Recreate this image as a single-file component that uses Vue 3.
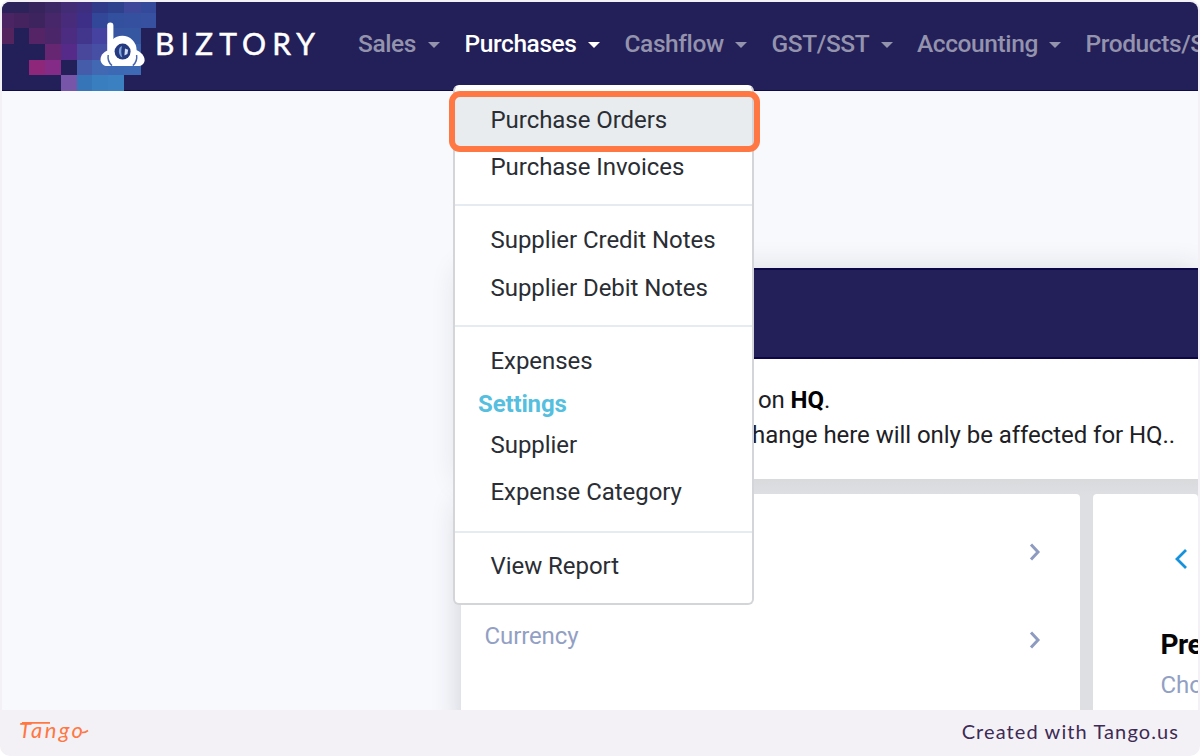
<template>
  <div class="frame">
    <div class="screen">
      <header class="navbar">
        <div class="brand">
          <svg class="mosaic" width="156" height="89" viewBox="0 0 156 89" shape-rendering="crispEdges">
            <rect
              v-for="cell in cells"
              :key="cell.id"
              :x="cell.x"
              :y="cell.y"
              :width="cell.w"
              :height="cell.h"
              :fill="cell.fill"
            />
          </svg>
          <svg class="brand-mark" width="46" height="46" viewBox="0 0 46 46">
            <path d="M9 28 C3 30 0 34 0.6 38.5 C1.2 42 4 44 7 44 H38 C41.5 44 44.3 42 44.6 38.5 C44.8 34 41 30 36 28 Z" fill="#fff" />
            <path d="M8.2 33 C7.4 38 9 41 12 43.6 M36.6 33 C37.4 38 35.8 41 32.8 43.6" fill="none" stroke="#4a66ae" stroke-width="1.5" />
            <path d="M10.3 3.6 V28" fill="none" stroke="#fff" stroke-width="6.2" stroke-linecap="round" />
            <circle cx="22.3" cy="28" r="14.3" fill="#fff" />
            <path d="M11 34 H34 L31.5 43.5 H13.5 Z" fill="#fff" />
            <circle cx="22.6" cy="29.6" r="8" fill="#263a80" />
            <path d="M22 24 C18 25 17.5 33 22.4 35.6 C21 32 21 28 22 24 Z" fill="#7fa3d6" />
            <path d="M25 26.5 L28.2 27.8 L27.4 32 L24.4 33.5 Z" fill="#cfdcf2" />
          </svg>
          <span class="brand-name">BIZTORY</span>
        </div>
        <nav class="nav-links">
          <a
            v-for="link in links"
            :key="link.label"
            class="nav-link"
            :class="[link.key, { active: link.active }]"
          >
            {{ link.label }}<i v-if="link.caret" class="caret"></i>
          </a>
        </nav>
      </header>

      <main class="content">
        <section class="panel">
          <div class="panel-head"></div>
          <div class="panel-body">
            <p class="line-first">on <b>HQ</b>.</p>
            <p class="line-second">hange here will only be affected for HQ..</p>
          </div>
        </section>
        <section class="cards">
          <div class="card card-list">
            <div class="list-row">
              <span></span>
              <svg class="chevron" width="14" height="20" viewBox="0 0 14 20">
                <path d="M3 2.5 L10 10 L3 17.5" />
              </svg>
            </div>
            <div class="list-row">
              <span class="list-label">Currency</span>
              <svg class="chevron" width="14" height="20" viewBox="0 0 14 20">
                <path d="M3 2.5 L10 10 L3 17.5" />
              </svg>
            </div>
          </div>
          <div class="card card-detail">
            <svg class="back" width="16" height="22" viewBox="0 0 16 22">
              <path d="M13 2 L4 11 L13 20" />
            </svg>
            <h3>Pre</h3>
            <p>Cho</p>
          </div>
        </section>
      </main>

      <div class="dropdown">
        <template v-for="(item, i) in menu" :key="i">
          <div v-if="item.type === 'divider'" class="divider" :class="{ last: item.last }"></div>
          <div v-else-if="item.type === 'header'" class="menu-header">{{ item.label }}</div>
          <a v-else class="menu-item" :class="{ hovered: item.hovered }">{{ item.label }}</a>
        </template>
      </div>
      <div class="highlight"></div>
    </div>

    <footer class="footer">
      <svg class="tango" width="72" height="36" viewBox="0 0 72 36">
        <path d="M2 6.9 H30" />
        <text x="-1" y="22" textLength="64">Tango</text>
        <path d="M62 16.5 Q65 16.8 68 14.5" />
      </svg>
      <span class="credit">Created with Tango.us</span>
    </footer>
  </div>
</template>

<script setup>
const links = [
  { key: 'sales', label: 'Sales', caret: true },
  { key: 'purchases', label: 'Purchases', caret: true, active: true },
  { key: 'cashflow', label: 'Cashflow', caret: true },
  { key: 'gst', label: 'GST/SST', caret: true },
  { key: 'accounting', label: 'Accounting', caret: true },
  { key: 'products', label: 'Products/S', caret: false }
]

const menu = [
  { label: 'Purchase Orders', hovered: true },
  { label: 'Purchase Invoices' },
  { type: 'divider' },
  { label: 'Supplier Credit Notes' },
  { label: 'Supplier Debit Notes' },
  { type: 'divider' },
  { label: 'Expenses' },
  { type: 'header', label: 'Settings' },
  { label: 'Supplier' },
  { label: 'Expense Category' },
  { type: 'divider', last: true },
  { label: 'View Report' }
]

// Mosaic behind the logo, one row of colours per line (null = navbar colour)
const mosaicRows = [
  ['#2c235a', '#2b2359', '#37245d', '#3b2864', '#432c76', '#3d2e80', '#303a88', '#2f418d', '#3f479a', '#34499a'],
  ['#4b2463', '#45235f', '#3d245f', '#48266a', '#492b7b', '#3d2e87', '#334798', '#32509e', '#34509e', '#37509f'],
  ['#54245f', null, '#542467', '#4b2669', '#4b2c80', '#42368c', '#4642a0', '#3855a2', '#3556a1', null],
  [null, null, null, '#672672', '#562a89', '#49479b', '#474fa4', '#3a60ac', '#3a60ac', null],
  [null, null, '#8e277a', '#842b87', null, '#455caa', '#4268b3', '#3d68b4', '#3e69b4', null],
  [null, null, null, null, '#7756a9', '#3575b8', '#397fc0', '#3b80c0', null, null]
]
const colEdges = [0, 12, 27, 43, 59, 75, 90, 106, 122, 139, 154]
const rowEdges = [0, 11, 26, 42, 58, 73, 89]

const cells = mosaicRows.flatMap((row, r) =>
  row
    .map((fill, c) => ({
      id: `${r}-${c}`,
      x: colEdges[c],
      y: rowEdges[r],
      w: colEdges[c + 1] - colEdges[c],
      h: rowEdges[r + 1] - rowEdges[r],
      fill
    }))
    .filter((cell) => cell.fill)
)
</script>

<style>
body {
  margin: 0;
  background: #fff;
}
</style>

<style scoped>
.frame {
  box-sizing: border-box;
  width: 1200px;
  height: 756px;
  padding: 2px 2px 0;
  display: flex;
  flex-direction: column;
  background: #f3f1f6;
  border-radius: 10px;
  overflow: hidden;
  font-family: Roboto, "Liberation Sans", sans-serif;
  font-size: 24px;
}

.screen {
  position: relative;
  height: 708px;
  display: flex;
  flex-direction: column;
  background: #f8f9fd;
  border-radius: 8px 8px 0 0;
  overflow: hidden;
}

/* Navbar */
.navbar {
  box-sizing: border-box;
  height: 89px;
  flex: none;
  display: flex;
  background: #231f58;
  border-bottom: 1px solid #100c48;
}

.brand {
  position: relative;
  width: 356px;
  flex: none;
  display: flex;
  align-items: center;
}

.mosaic {
  position: absolute;
  left: 0;
  top: 0;
}

.brand-mark {
  position: relative;
  margin: 0 0 3px 98px;
}

.brand-name {
  margin: 0 0 6px 9px;
  font-family: Lato, sans-serif;
  font-size: 30px;
  letter-spacing: 6.1px;
  line-height: 36px;
  color: #fff;
  -webkit-text-stroke: 0.5px #fff;
}

.nav-links {
  display: flex;
  white-space: nowrap;
}

.nav-link {
  flex: none;
  display: flex;
  align-items: center;
  box-sizing: border-box;
  height: 82px;
  font-size: 24.5px;
  font-weight: 500;
  letter-spacing: -0.4px;
  color: #9493ad;
}

.nav-link.active {
  color: #fff;
}

.nav-link.sales { width: 106.5px; }
.nav-link.purchases { width: 160px; }
.nav-link.cashflow { width: 147px; }
.nav-link.gst { width: 145.5px; }
.nav-link.accounting { width: 168.5px; }

.caret {
  margin: 4px 0 0 11.5px;
  border: 6px solid transparent;
  border-top-color: currentColor;
  border-bottom: 0;
}

/* Page content */
.content {
  flex: 1;
  display: flex;
  flex-direction: column;
  padding: 177px 0 0 459px;
}

.panel {
  height: 211px;
  flex: none;
  background: #fff;
  box-shadow: 0 2px 28px rgba(30, 35, 50, 0.16);
}

.panel-head {
  box-sizing: border-box;
  height: 91px;
  background: #231f58;
  border-top: 2px solid #0c0848;
  border-bottom: 2px solid #0c0848;
}

.panel-body {
  padding: 24px 0 0 291px;
  color: #1d2025;
}

.panel-body p {
  margin: 0;
  line-height: 35px;
  white-space: nowrap;
}

.line-first {
  padding-left: 6px;
  letter-spacing: -0.1px;
}

.line-first b {
  color: #000;
}

.line-second {
  letter-spacing: -0.05px;
}

.cards {
  position: relative;
  flex: 1;
  display: flex;
  gap: 13px;
  padding-top: 15px;
  background: linear-gradient(#d8dadc, #dedfe3 16px);
  box-shadow: 0 24px 28px rgba(30, 35, 50, 0.2);
  clip-path: inset(0 0 0 -40px);
}

.card {
  background: #fff;
  border-radius: 4px 4px 0 0;
}

.card-list {
  box-sizing: border-box;
  width: 619px;
  flex: none;
  padding: 14px 38px 0 23.5px;
}

.list-row {
  height: 88px;
  display: flex;
  align-items: center;
  justify-content: space-between;
  letter-spacing: -0.1px;
  color: #92a0c4;
}

.list-label {
  padding-bottom: 9px;
}

.chevron path {
  fill: none;
  stroke: #8e9bc0;
  stroke-width: 3;
}

.card-detail {
  flex: 1;
  padding: 54px 0 0 67.5px;
  overflow: hidden;
}

.back {
  display: block;
  margin-left: 12px;
}

.back path {
  fill: none;
  stroke: #1592dc;
  stroke-width: 2.8;
}

.card-detail h3 {
  margin: 57px 0 0;
  font-size: 28px;
  font-weight: 700;
  line-height: 36px;
  letter-spacing: -0.5px;
  color: #050507;
}

.card-detail p {
  margin: 6px 0 0;
  line-height: 32px;
  color: #92a0c4;
}

/* Purchases menu */
.dropdown {
  position: absolute;
  left: 451px;
  top: 83px;
  box-sizing: border-box;
  width: 301px;
  height: 520px;
  padding-top: 9.8px;
  background: #fff;
  border: 2px solid #d3d5d8;
  border-top-color: #fff;
  border-radius: 6px;
}

.menu-item {
  display: block;
  height: 47.2px;
  padding-left: 35.5px;
  line-height: 47.2px;
  letter-spacing: -0.05px;
  color: #2a2e34;
}

/* fill reaches slightly below the row, down to the highlight frame */
.menu-item.hovered {
  background: #e8ecef;
  box-shadow: 0 3px 0 #e8ecef;
}

.divider {
  height: 2px;
  margin: 13.2px 0 11.1px;
  background: #e6ebf1;
}

.divider.last {
  margin: 15.2px 0 9.4px;
}

.menu-header {
  height: 34.5px;
  padding: 2px 0 0 23px;
  line-height: 34.5px;
  font-weight: 700;
  letter-spacing: -0.15px;
  color: #56bfe0;
}

.highlight {
  position: absolute;
  left: 447px;
  top: 89px;
  box-sizing: border-box;
  width: 311px;
  height: 61px;
  border: 6px solid #ff7742;
  border-radius: 11px;
}

/* Footer */
.footer {
  flex: 1;
  display: flex;
  align-items: center;
  justify-content: space-between;
  padding: 0 19px 4px 18px;
}

.tango {
  margin-top: 5px;
  overflow: visible;
}

.tango text {
  font-family: Lato, sans-serif;
  font-size: 22px;
  font-style: italic;
  font-weight: 400;
  fill: #ff7742;
}

.tango path {
  fill: none;
  stroke: #ff7742;
  stroke-width: 1.6;
}

.credit {
  font-family: Lato, sans-serif;
  font-size: 20px;
  letter-spacing: 1.1px;
  color: #3d2a55;
}
</style>
